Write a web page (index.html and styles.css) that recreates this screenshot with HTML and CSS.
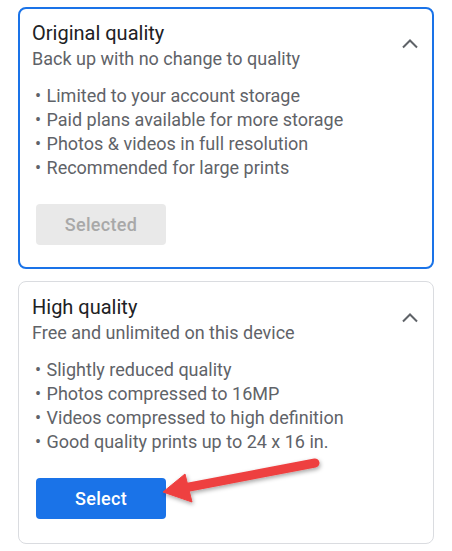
FILE: index.html
```html
<!DOCTYPE html>
<html lang="en">
<head>
<meta charset="utf-8">
<title>Backup quality</title>
<link rel="stylesheet" href="styles.css">
</head>
<body>
<main class="page">
  <section class="card card-selected">
    <div class="card-head">
      <div class="head-text">
        <h2 class="title">Original quality</h2>
        <p class="subtitle">Back up with no change to quality</p>
      </div>
      <svg class="chevron" width="24" height="24" viewBox="0 0 24 24" aria-hidden="true"><polyline points="5,15.5 12,8.5 19,15.5" fill="none" stroke="#5f6368" stroke-width="2"/></svg>
    </div>
    <ul class="bullets">
      <li>Limited to your account storage</li>
      <li>Paid plans available for more storage</li>
      <li>Photos &amp; videos in full resolution</li>
      <li>Recommended for large prints</li>
    </ul>
    <button class="btn btn-disabled" type="button">Selected</button>
  </section>
  <section class="card">
    <div class="card-head">
      <div class="head-text">
        <h2 class="title">High quality</h2>
        <p class="subtitle">Free and unlimited on this device</p>
      </div>
      <svg class="chevron" width="24" height="24" viewBox="0 0 24 24" aria-hidden="true"><polyline points="5,15.5 12,8.5 19,15.5" fill="none" stroke="#5f6368" stroke-width="2"/></svg>
    </div>
    <ul class="bullets">
      <li>Slightly reduced quality</li>
      <li>Photos compressed to 16MP</li>
      <li>Videos compressed to high definition</li>
      <li>Good quality prints up to 24 x 16 in.</li>
    </ul>
    <button class="btn btn-primary" type="button">Select</button>
  </section>
</main>
<svg class="arrow" width="452" height="551" viewBox="0 0 452 551" aria-hidden="true">
  <defs>
    <filter id="sh" x="-20%" y="-50%" width="140%" height="200%">
      <feDropShadow dx="1" dy="2" stdDeviation="2" flood-color="#000" flood-opacity="0.35"/>
    </filter>
  </defs>
  <g filter="url(#sh)" fill="#ee4040" stroke="#ee4040">
    <line x1="315" y1="463" x2="184" y2="488" stroke-width="9" stroke-linecap="round"/>
    <polygon points="163,492 185,474 192,502" stroke-width="1" stroke-linejoin="round"/>
  </g>
</svg>
</body>
</html>
```
FILE: styles.css
```css
* { box-sizing: border-box; }
html, body { margin: 0; padding: 0; background: #ffffff; }
body {
  position: relative;
  width: 452px;
  height: 551px;
  overflow: hidden;
  font-family: Roboto, "Liberation Sans", Arial, sans-serif;
}
.page {
  padding: 7px 0 0 18px;
  width: 434px;
  display: flex;
  flex-direction: column;
  gap: 12px;
}
.card {
  width: 416px;
  border: 1px solid #dadce0;
  border-radius: 8px;
  padding: 13px 11px 24px 13px;
  display: flex;
  flex-direction: column;
  align-items: flex-start;
}
.card-selected {
  border: 2px solid #1a73e8;
  padding: 12px 10px 22px 12px;
}
.card-head {
  width: 100%;
  display: flex;
  justify-content: space-between;
  align-items: flex-start;
}
.title {
  margin: 0;
  font-size: 20px;
  line-height: 24px;
  font-weight: 400;
  color: #202124;
}
.subtitle {
  margin: 2px 0 0;
  font-size: 18px;
  line-height: 24px;
  color: #5f6368;
}
.chevron { margin-top: 11px; flex: none; }
.bullets {
  list-style: none;
  margin: 13px 0 0;
  padding: 0 0 0 3px;
  font-size: 18px;
  line-height: 24px;
  color: #5f6368;
}
.bullets li { height: 24px; }
.bullets li::before { content: "\2022\00a0"; margin-right: 1px; }
.btn {
  margin: 24px 0 0 4px;
  width: 130px;
  height: 41px;
  border: none;
  border-radius: 4px;
  font-family: Roboto, "Liberation Sans", Arial, sans-serif;
  font-size: 18px;
  font-weight: 500;
  letter-spacing: 0.3px;
}
.btn-disabled { background: #e9e9e9; color: #a8a8a8; }
.btn-primary { background: #1a73e8; color: #ffffff; }
.arrow { position: absolute; top: 0; left: 0; pointer-events: none; }
```
